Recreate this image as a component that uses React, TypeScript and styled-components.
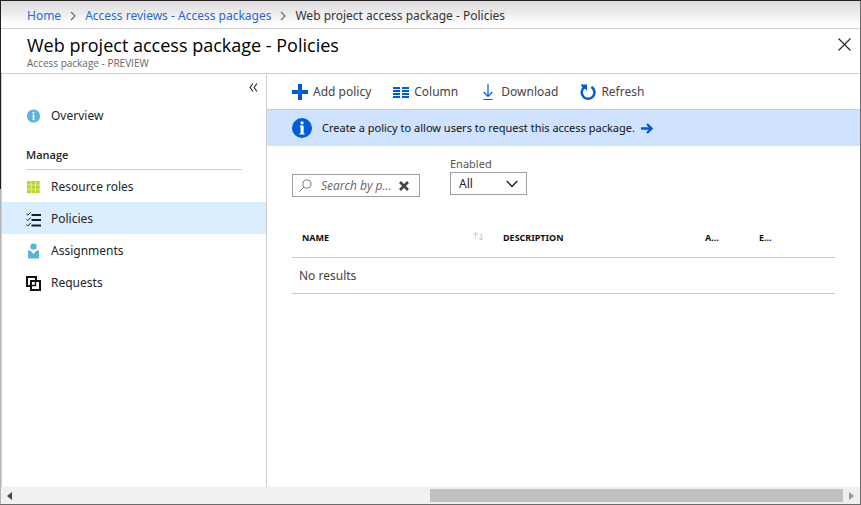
import React from 'react';
import styled, { createGlobalStyle } from 'styled-components';

const BLUE = '#015cda';
const LINE = '#cfcfcf';

const GlobalStyle = createGlobalStyle`
  *, *::before, *::after { box-sizing: border-box; }
  body {
    margin: 0;
    background: #fff;
    color: #252525;
    font-family: 'Noto Sans', 'Open Sans', sans-serif;
    font-size: 12px;
    line-height: 16px;
  }
  button, input, select { font: inherit; color: inherit; }
`;

const Window = styled.div`
  display: flex;
  min-height: 100vh;
  border: 1px solid #6b6b6b;
  border-top-color: #231f20;
  border-left: 0;
`;

const Edge = styled.div`
  flex: none;
  width: 1px;
  background: linear-gradient(#231f20 188px, #b5b5b5 188px);
`;

const Blade = styled.div`
  flex: 1;
  min-width: 0;
  display: flex;
  flex-direction: column;
`;

const Breadcrumbs = styled.nav`
  display: flex;
  align-items: center;
  gap: 9px;
  height: 28px;
  padding: 2px 26px 0;
  border-bottom: 1px solid ${LINE};
  background: linear-gradient(#dcdadc, #fff 24px);
  white-space: nowrap;
`;

const Crumb = styled.a`
  color: #1f69dd;
  text-decoration: none;
`;

const CurrentCrumb = styled.span`
  color: #333;
`;

const Header = styled.header`
  display: flex;
  justify-content: space-between;
  align-items: flex-start;
  height: 45px;
  padding: 5px 9px 0 26px;
  border-bottom: 1px solid ${LINE};
`;

const Title = styled.h1`
  margin: 0;
  font-family: 'Open Sans', sans-serif;
  font-size: 18px;
  line-height: 22px;
  font-weight: 400;
  color: #000;
`;

const Subtitle = styled.p`
  margin: 0;
  font-family: 'Open Sans', sans-serif;
  font-size: 10px;
  line-height: 14px;
  color: #666;
`;

const IconButton = styled.button`
  display: flex;
  padding: 0;
  border: 0;
  background: none;
  cursor: pointer;
`;

const CloseButton = styled(IconButton)`
  margin-top: 4px;
`;

const Body = styled.div`
  flex: 1;
  display: flex;
`;

const Sidebar = styled.aside`
  flex: none;
  width: 266px;
  border-left: 1px solid ${LINE};
  border-right: 1px solid ${LINE};
`;

const CollapseRow = styled.div`
  display: flex;
  justify-content: flex-end;
  height: 25px;
  padding: 9px 8px 0;
`;

const MenuLink = styled.a<{ $active?: boolean }>`
  display: flex;
  align-items: center;
  gap: 10px;
  height: 32px;
  padding: 2px 24px 0;
  background: ${(p) => (p.$active ? '#dbeeff' : 'transparent')};
  color: #252525;
  text-decoration: none;
`;

const GroupTitle = styled.h2`
  margin: 16px 24px 0;
  height: 23px;
  border-bottom: 1px solid ${LINE};
  font-family: 'Open Sans', sans-serif;
  font-size: 11px;
  line-height: 16px;
  font-weight: 600;
`;

const Content = styled.main`
  flex: 1;
  min-width: 0;
`;

const Toolbar = styled.div`
  display: flex;
  align-items: center;
  gap: 22px;
  height: 36px;
  padding: 1px 25px 0;
  border-bottom: 1px solid ${LINE};
`;

const Command = styled.button`
  display: flex;
  align-items: center;
  gap: 5px;
  padding: 0;
  border: 0;
  background: none;
  color: #444;
  line-height: 18px;
  white-space: nowrap;
  cursor: pointer;
`;

const Banner = styled.a`
  display: flex;
  align-items: center;
  height: 36px;
  padding: 0 25px;
  background: #cfe2ff;
  color: #111;
  font-size: 11px;
  text-decoration: none;
`;

const BannerText = styled.span`
  margin: 0 6px 0 10px;
`;

const Filters = styled.div`
  display: flex;
  align-items: flex-start;
  gap: 30px;
  padding: 10px 25px 0;
`;

const SearchBox = styled.div`
  display: flex;
  align-items: center;
  width: 128px;
  height: 23px;
  margin-top: 18px;
  padding: 0 10px 0 6px;
  border: 1px solid #a0a0a0;
`;

const SearchInput = styled.input`
  flex: 1;
  min-width: 0;
  margin-left: 9px;
  padding: 0;
  border: 0;
  outline: 0;
  background: none;
  font-family: 'Open Sans', sans-serif;
  font-style: italic;
  &::placeholder { color: #666; opacity: 1; }
`;

const Field = styled.label`
  display: flex;
  flex-direction: column;
  font-size: 11px;
  color: #555;
`;

const SelectWrap = styled.span`
  display: grid;
  width: 77px;
  height: 23px;
  align-items: center;
  border: 1px solid #a0a0a0;
  & > * { grid-area: 1 / 1; }
  & > svg { justify-self: end; margin-right: 8px; pointer-events: none; }
`;

const Select = styled.select`
  appearance: none;
  width: 100%;
  height: 21px;
  padding: 0 8px;
  border: 0;
  background: none;
  font-size: 12px;
  color: #252525;
`;

const TableArea = styled.div`
  padding: 22px 25px 24px;
`;

const Table = styled.table`
  width: 100%;
  table-layout: fixed;
  border-collapse: collapse;
`;

const Th = styled.th<{ $width?: number }>`
  width: ${(p) => (p.$width ? `${p.$width}px` : 'auto')};
  height: 38px;
  padding: 0 9px 0 10px;
  border-bottom: 1px solid #c8c8c8;
  font-size: 9px;
  font-weight: 700;
  text-align: left;
  color: #111;
  white-space: nowrap;
`;

const HeadCell = styled.div`
  display: flex;
  align-items: center;
  justify-content: space-between;
`;

const Td = styled.td`
  height: 36px;
  padding: 2px 7px 0;
  border-bottom: 1px solid #c8c8c8;
  color: #444;
`;

const Scrollbar = styled.div`
  display: flex;
  align-items: center;
  height: 17px;
  padding: 0 6px;
  background: #f0f0f0;
`;

const Track = styled.div`
  flex: 1;
  display: flex;
  justify-content: flex-end;
  margin: 0 6px 0 5px;
`;

const Thumb = styled.div`
  width: 50%;
  height: 13px;
  background: #c1c1c1;
`;

const Chevron = () => (
  <svg width="6" height="10" viewBox="0 0 6 10" fill="none" stroke="#666" strokeWidth="1.1">
    <path d="M1 1l4 4-4 4" />
  </svg>
);

const InfoIcon = ({ size, color }: { size: number; color: string }) => (
  <svg width={size} height={size} viewBox="0 0 20 20">
    <circle cx="10" cy="10" r="10" fill={color} />
    <circle cx="10" cy="4.8" r="1.6" fill="#fff" />
    <path d="M8 7.6h3.6v7.6h1v1.4H7.6v-1.4h1V9H8z" fill="#fff" />
  </svg>
);

const MenuInfoIcon = () => (
  <svg width="15" height="14" viewBox="0 0 15 14">
    <circle cx="7.5" cy="7" r="6.6" fill="#59b4d9" />
    <rect x="6.6" y="2.8" width="1.8" height="1.8" fill="#fff" />
    <rect x="6.6" y="5.6" width="1.8" height="5.6" fill="#fff" />
  </svg>
);

const GridIcon = () => (
  <svg width="15" height="14" viewBox="0 0 15 14" fill="#b8d432">
    {[1, 5.4, 9.8].map((x) =>
      [1, 5.2, 9.4].map((y) => <rect key={`${x}-${y}`} x={x} y={y} width="3.9" height="3.7" />),
    )}
  </svg>
);

const ChecklistIcon = () => (
  <svg width="15" height="15" viewBox="0 0 15 15" fill="none" stroke="#1e1e1e">
    <path d="M5.5 3h9.5M5.5 8h9.5M5.5 13.5h9.5" strokeWidth="2" />
    <path d="M.3 1.8L1.8 3.2 4.6.3M.3 7.2l1.5 1.4 2.8-2.9M.3 12.6L1.8 14l2.8-2.9" />
  </svg>
);

const PersonIcon = () => (
  <svg width="15" height="16" viewBox="0 0 15 16" fill="#59b4d9">
    <circle cx="7.5" cy="3.6" r="3.2" />
    <path d="M2 7.6h2.4L7.5 11l3.1-3.4H13V15.4H2z" />
  </svg>
);

const SquaresIcon = () => (
  <svg width="15" height="15" viewBox="0 0 15 15" fill="none" stroke="#111" strokeWidth="2">
    <path d="M5 10H1V1h9v4" />
    <rect x="5" y="5" width="9" height="9" />
    <path d="M5 9.5h4.5V5" strokeWidth="1.4" />
  </svg>
);

const PlusIcon = () => (
  <svg width="16" height="16" viewBox="0 0 16 16" fill={BLUE}>
    <path d="M6 0h4v6h6v4h-6v6H6v-6H0V6h6z" />
  </svg>
);

const ColumnsIcon = () => (
  <svg width="16" height="11" viewBox="0 0 16 11" fill={BLUE}>
    {[0, 3, 6, 9].map((y) => (
      <path key={y} d={`M0 ${y}h7v2H0zM9 ${y}h7v2H9z`} />
    ))}
  </svg>
);

const DownloadIcon = () => (
  <svg width="16" height="17" viewBox="0 0 16 17" fill="none" stroke={BLUE}>
    <path d="M8 0v12M3.6 8L8 12.4 12.4 8" strokeWidth="1.2" />
    <path d="M3.5 15.5h9" />
  </svg>
);

const RefreshIcon = () => (
  <svg width="16" height="17" viewBox="0 0 16 17">
    <path d="M11.4 2.9A6.4 6.4 0 1 1 3.8 3.6" fill="none" stroke={BLUE} strokeWidth="2.5" />
    <path d="M.6.4H7V6.8L5.2 5 3 4.8z" fill={BLUE} />
  </svg>
);

const ArrowIcon = () => (
  <svg width="12" height="11" viewBox="0 0 12 11" fill="none" stroke={BLUE} strokeWidth="2.4">
    <path d="M0 5.5h10.2M6 1l4.5 4.5L6 10" />
  </svg>
);

const CloseIcon = () => (
  <svg width="13" height="13" viewBox="0 0 13 13" stroke="#222" strokeWidth="1.1">
    <path d="M.5.5l12 12M12.5.5l-12 12" />
  </svg>
);

const CollapseIcon = () => (
  <svg width="9" height="9" viewBox="0 0 9 9" fill="none" stroke="#222" strokeWidth="1.1">
    <path d="M4 .5l-3 4 3 4M8 .5l-3 4 3 4" />
  </svg>
);

const SearchIcon = () => (
  <svg width="13" height="13" viewBox="0 0 13 13" fill="none" stroke="#777">
    <circle cx="8" cy="5" r="4.1" />
    <path d="M5 8L.6 12.4" />
  </svg>
);

const ClearIcon = () => (
  <svg width="10" height="10" viewBox="0 0 10 10" stroke="#444" strokeWidth="2.7">
    <path d="M1 1l8 8M9 1L1 9" />
  </svg>
);

const DownChevron = () => (
  <svg width="12" height="8" viewBox="0 0 12 8" fill="none" stroke="#222" strokeWidth="1.4">
    <path d="M.8 1L6 6.4 11.2 1" />
  </svg>
);

const SortIcon = () => (
  <svg width="11" height="12" viewBox="0 0 11 12" fill="none" stroke="#c4c4c4" strokeWidth="0.9">
    <path d="M2.7 6.5V.6M.4 2.8L2.7.6 5 2.8M8.2 1.5V8M5.9 6l2.3 2.2L10.5 6" />
  </svg>
);

const menu = [
  { label: 'Resource roles', icon: <GridIcon /> },
  { label: 'Policies', icon: <ChecklistIcon />, active: true },
  { label: 'Assignments', icon: <PersonIcon /> },
  { label: 'Requests', icon: <SquaresIcon /> },
];

const commands = [
  { label: 'Add policy', icon: <PlusIcon /> },
  { label: 'Column', icon: <ColumnsIcon /> },
  { label: 'Download', icon: <DownloadIcon /> },
  { label: 'Refresh', icon: <RefreshIcon /> },
];

export default function App() {
  return (
    <>
      <GlobalStyle />
      <Window>
        <Edge />
        <Blade>
          <Breadcrumbs aria-label="Breadcrumb">
            <Crumb href="#home">Home</Crumb>
            <Chevron />
            <Crumb href="#reviews">Access reviews - Access packages</Crumb>
            <Chevron />
            <CurrentCrumb>Web project access package - Policies</CurrentCrumb>
          </Breadcrumbs>
          <Header>
            <div>
              <Title>Web project access package - Policies</Title>
              <Subtitle>Access package - PREVIEW</Subtitle>
            </div>
            <CloseButton aria-label="Close">
              <CloseIcon />
            </CloseButton>
          </Header>
          <Body>
            <Sidebar>
              <CollapseRow>
                <IconButton aria-label="Collapse menu">
                  <CollapseIcon />
                </IconButton>
              </CollapseRow>
              <nav>
                <MenuLink href="#overview">
                  <MenuInfoIcon />
                  Overview
                </MenuLink>
                <GroupTitle>Manage</GroupTitle>
                {menu.map((item) => (
                  <MenuLink key={item.label} href="#menu" $active={item.active}>
                    {item.icon}
                    {item.label}
                  </MenuLink>
                ))}
              </nav>
            </Sidebar>
            <Content>
              <Toolbar>
                {commands.map((c) => (
                  <Command key={c.label}>
                    {c.icon}
                    {c.label}
                  </Command>
                ))}
              </Toolbar>
              <Banner href="#create">
                <InfoIcon size={20} color={BLUE} />
                <BannerText>Create a policy to allow users to request this access package.</BannerText>
                <ArrowIcon />
              </Banner>
              <Filters>
                <SearchBox>
                  <SearchIcon />
                  <SearchInput type="text" aria-label="Search" placeholder="Search by p..." />
                  <IconButton aria-label="Clear search">
                    <ClearIcon />
                  </IconButton>
                </SearchBox>
                <Field>
                  Enabled
                  <SelectWrap>
                    <Select defaultValue="All">
                      <option>All</option>
                      <option>Yes</option>
                      <option>No</option>
                    </Select>
                    <DownChevron />
                  </SelectWrap>
                </Field>
              </Filters>
              <TableArea>
                <Table>
                  <thead>
                    <tr>
                      <Th $width={201}>
                        <HeadCell>
                          NAME
                          <SortIcon />
                        </HeadCell>
                      </Th>
                      <Th $width={202}>DESCRIPTION</Th>
                      <Th $width={54}>A...</Th>
                      <Th>E...</Th>
                    </tr>
                  </thead>
                  <tbody>
                    <tr>
                      <Td colSpan={4}>No results</Td>
                    </tr>
                  </tbody>
                </Table>
              </TableArea>
            </Content>
          </Body>
          <Scrollbar>
            <svg width="5" height="8" viewBox="0 0 5 8" fill="#444">
              <path d="M5 0v8L0 4z" />
            </svg>
            <Track>
              <Thumb />
            </Track>
            <svg width="5" height="8" viewBox="0 0 5 8" fill="#999">
              <path d="M0 0v8l5-4z" />
            </svg>
          </Scrollbar>
        </Blade>
      </Window>
    </>
  );
}
